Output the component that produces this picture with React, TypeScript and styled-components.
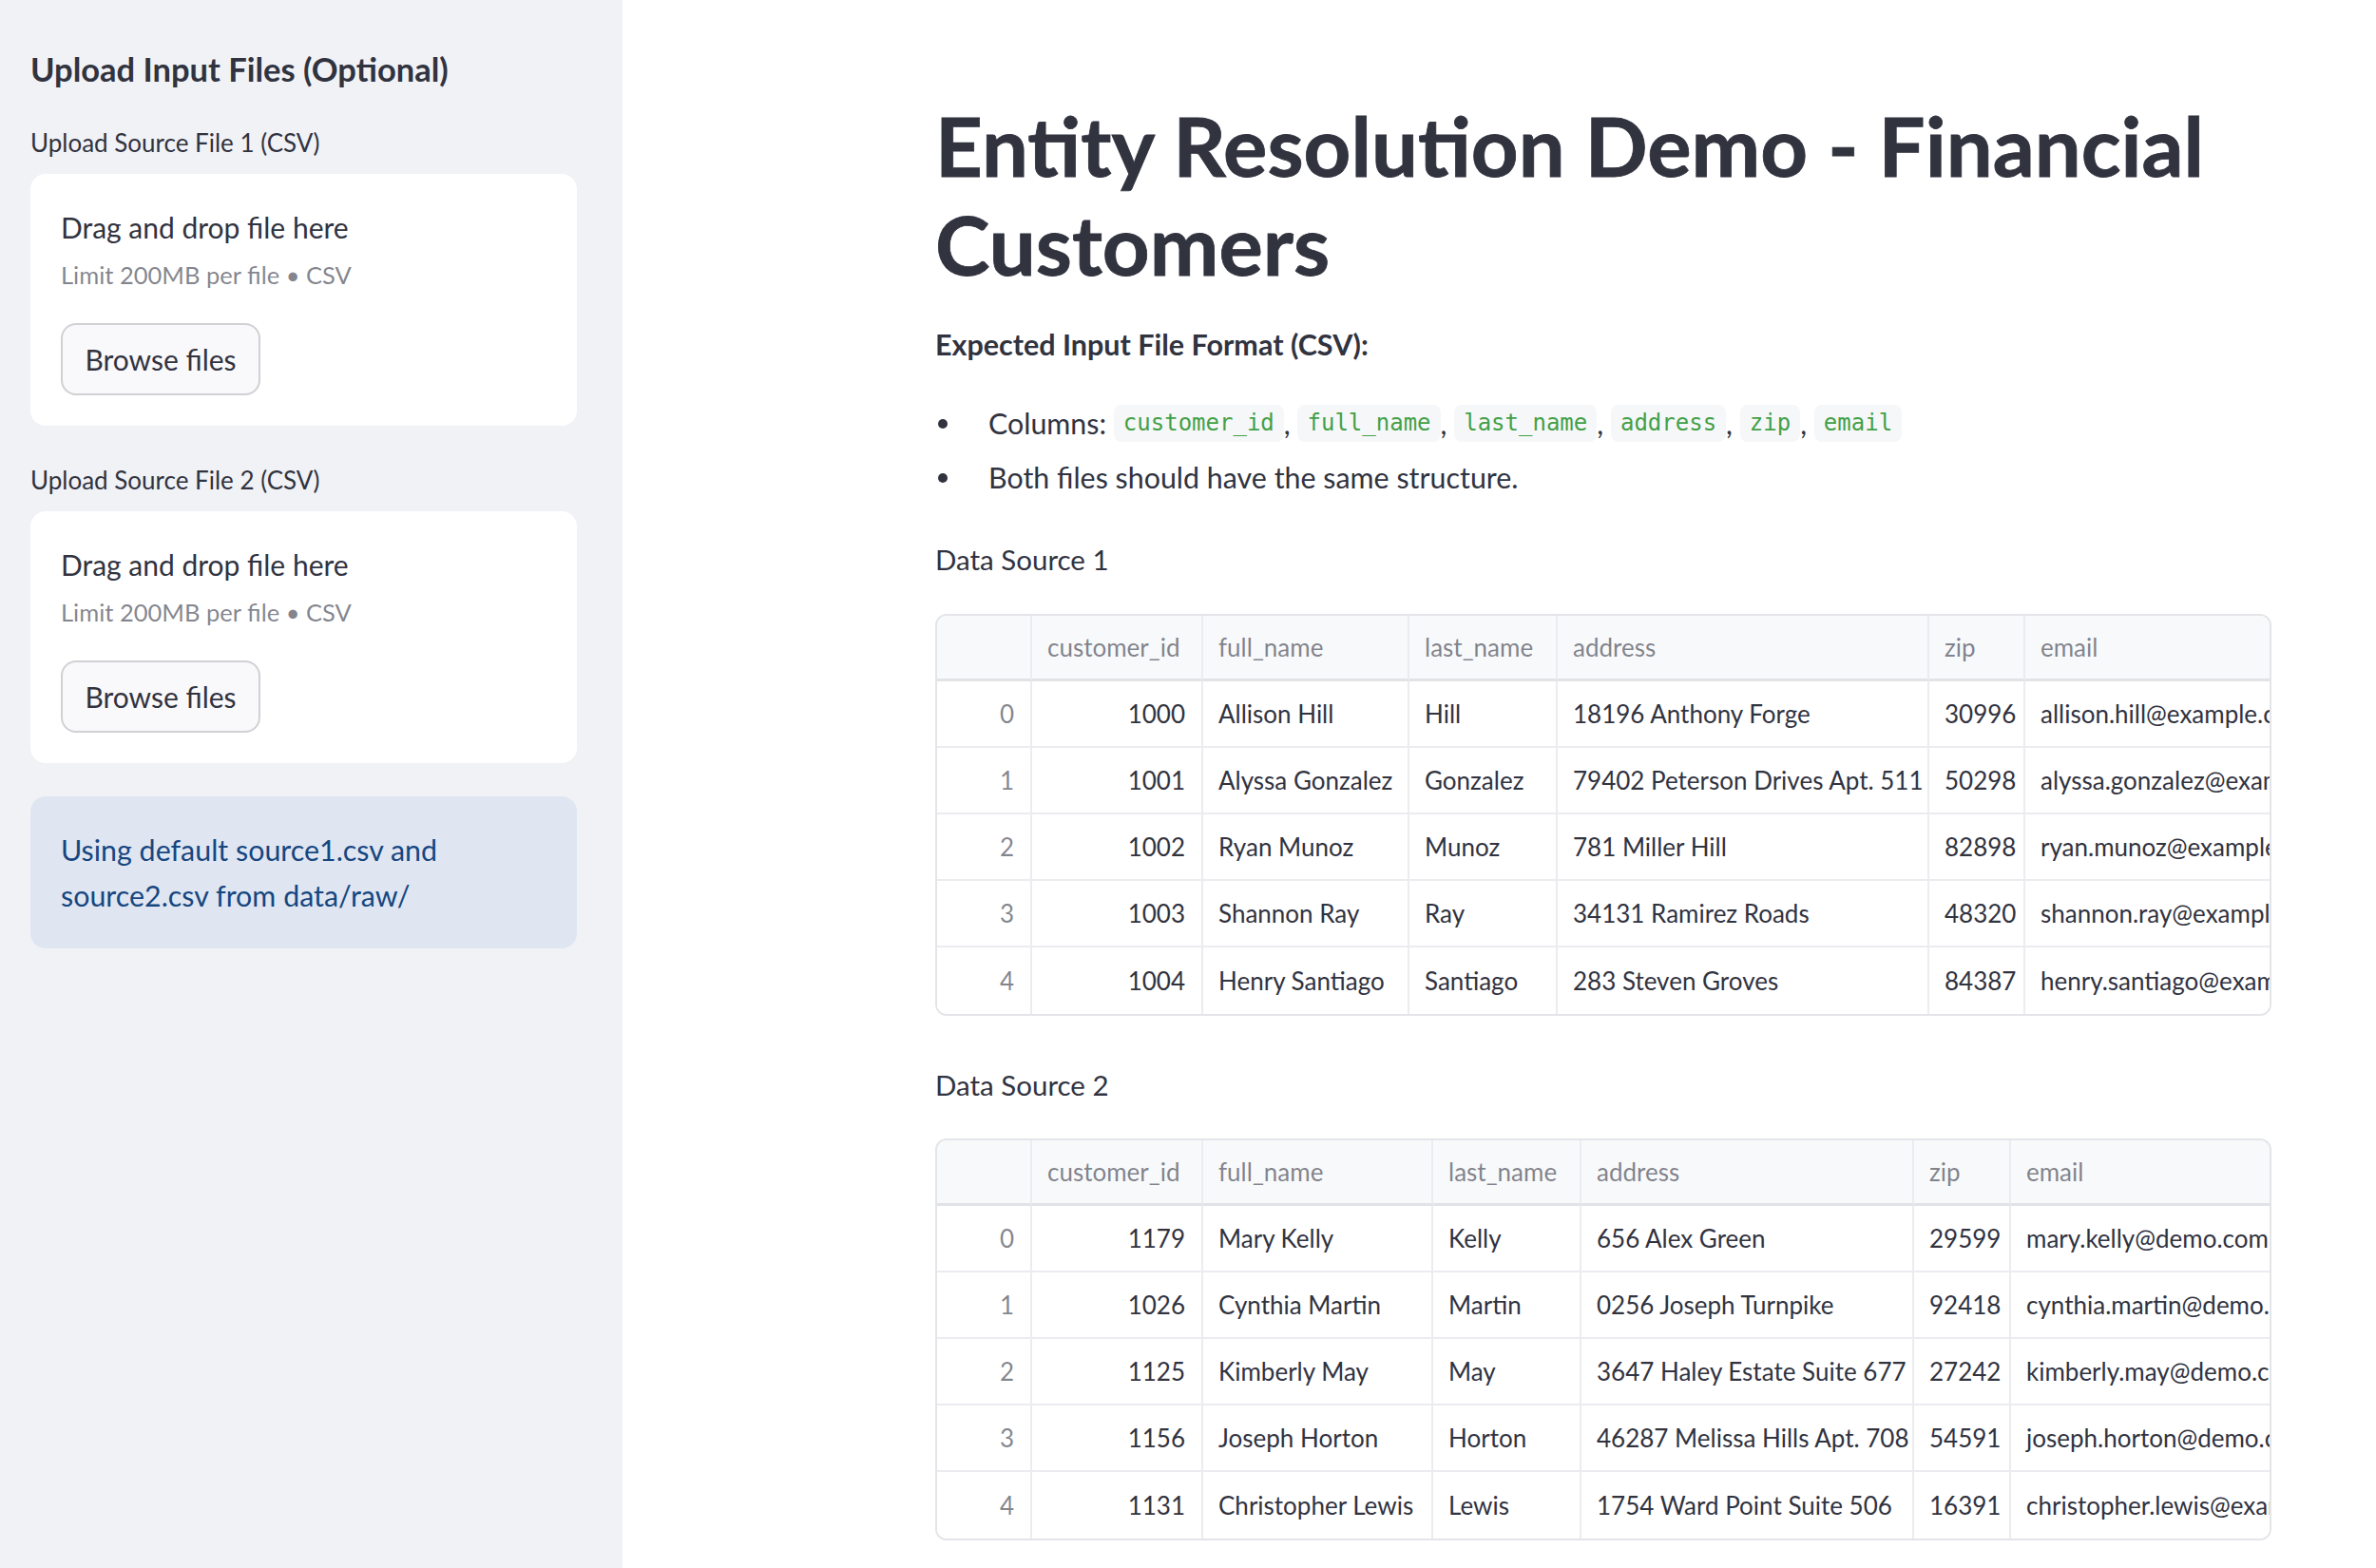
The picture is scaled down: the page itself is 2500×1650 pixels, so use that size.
import React from "react";
import styled, { createGlobalStyle } from "styled-components";

const GlobalStyle = createGlobalStyle`
  html, body { margin: 0; padding: 0; background: #ffffff; }
  body {
    font-family: Lato, "Noto Sans", sans-serif;
    color: #31333f;
    -webkit-font-smoothing: antialiased;
  }
  * { box-sizing: border-box; }
`;

const Page = styled.div`
  display: flex;
  width: 2500px;
  height: 1650px;
  overflow: hidden;
`;

const Sidebar = styled.aside`
  flex: 0 0 655px;
  background: #f0f2f6;
  padding: 49px 48px 0 32px;
  display: flex;
  flex-direction: column;
`;

const SidebarTitle = styled.h2`
  margin: 0;
  font-size: 34.5px;
  font-weight: 700;
  line-height: 48px;
  color: #31333f;
`;

const FieldLabel = styled.div<{ $top: number }>`
  margin: ${(p) => p.$top}px 0 13px;
  font-size: 26px;
  line-height: 40px;
  color: #31333f;
`;

const DropZone = styled.section`
  background: #ffffff;
  border-radius: 16px;
  padding: 32px;
  display: flex;
  flex-direction: column;
  align-items: flex-start;
`;

const DropTitle = styled.div`
  font-size: 30px;
  line-height: 48px;
  color: #31333f;
`;

const DropHint = styled.div`
  font-size: 25.5px;
  line-height: 52px;
  color: rgba(49, 51, 63, 0.6);
`;

const BrowseButton = styled.button`
  margin-top: 25px;
  width: 210px;
  height: 76px;
  padding: 0;
  border: 2px solid rgba(49, 51, 63, 0.2);
  border-radius: 16px;
  background: #f9f9fb;
  font-family: inherit;
  font-size: 30px;
  color: #31333f;
  cursor: pointer;
`;

const InfoBox = styled.div`
  margin-top: 35px;
  padding: 32px;
  border-radius: 16px;
  background: #dfe6f2;
  color: #17467f;
  font-size: 30.4px;
  line-height: 48px;
`;

const Main = styled.main`
  flex: 1;
  padding: 100px 0 0 329px;
`;

const Content = styled.div`
  width: 1406px;
  display: flex;
  flex-direction: column;
`;

const Title = styled.h1`
  margin: 0;
  font-size: 86.8px;
  line-height: 104px;
  font-weight: 700;
  color: #31333f;
  -webkit-text-stroke: 0.8px #31333f;
`;

const Lead = styled.p`
  margin: 29px 0 0;
  font-size: 30.5px;
  line-height: 51px;
  font-weight: 700;
`;

const List = styled.ul`
  margin: 32px 0 0;
  padding: 0;
  list-style: none;
  display: flex;
  flex-direction: column;
  gap: 6px;
`;

const Item = styled.li`
  display: flex;
  align-items: center;
  font-size: 30.4px;
  line-height: 51px;
  white-space: pre;
`;

const Dot = styled.span`
  flex: 0 0 10px;
  width: 10px;
  height: 10px;
  border-radius: 50%;
  background: #31333f;
  margin: 0 43px 0 3px;
`;

const Code = styled.code`
  font-family: "DejaVu Sans Mono", "Liberation Mono", monospace;
  font-size: 24px;
  line-height: 39px;
  padding: 0 10px;
  border-radius: 8px;
  background: #f6f7f9;
  color: #43a047;
`;

const Caption = styled.div<{ $top: number }>`
  margin-top: ${(p) => p.$top}px;
  font-size: 29.5px;
  line-height: 51px;
`;

const Grid = styled.div<{ $cols: string; $top: number }>`
  margin-top: ${(p) => p.$top}px;
  display: grid;
  grid-template-columns: ${(p) => p.$cols};
  border: 2px solid #e4e5e9;
  border-radius: 12px;
  overflow: hidden;
  width: 1406px;
`;

const Cell = styled.div<{ $head?: boolean; $index?: boolean; $right?: boolean; $last?: boolean; $end?: boolean }>`
  height: ${(p) => (p.$head ? 69 : 70)}px;
  display: flex;
  align-items: center;
  justify-content: ${(p) => (p.$right ? "flex-end" : "flex-start")};
  padding: 0 17px 0 16px;
  font-size: 26px;
  white-space: nowrap;
  overflow: hidden;
  background: ${(p) => (p.$head ? "#f8f9fb" : "#ffffff")};
  color: ${(p) => (p.$head || p.$index ? "rgba(49, 51, 63, 0.6)" : "#31333f")};
  border-right: ${(p) => (p.$end ? "none" : "2px solid #ebecef")};
  border-bottom: ${(p) => (p.$last ? "none" : p.$head ? "3px solid #e2e3e7" : "2px solid #ebecef")};
`;

type Row = [string, string, string, string, string, string];

const headers = ["customer_id", "full_name", "last_name", "address", "zip", "email"];

const source1: Row[] = [
  ["1000", "Allison Hill", "Hill", "18196 Anthony Forge", "30996", "allison.hill@example.com"],
  ["1001", "Alyssa Gonzalez", "Gonzalez", "79402 Peterson Drives Apt. 511", "50298", "alyssa.gonzalez@example.com"],
  ["1002", "Ryan Munoz", "Munoz", "781 Miller Hill", "82898", "ryan.munoz@example.com"],
  ["1003", "Shannon Ray", "Ray", "34131 Ramirez Roads", "48320", "shannon.ray@example.com"],
  ["1004", "Henry Santiago", "Santiago", "283 Steven Groves", "84387", "henry.santiago@example.com"],
];

const source2: Row[] = [
  ["1179", "Mary Kelly", "Kelly", "656 Alex Green", "29599", "mary.kelly@demo.com"],
  ["1026", "Cynthia Martin", "Martin", "0256 Joseph Turnpike", "92418", "cynthia.martin@demo.com"],
  ["1125", "Kimberly May", "May", "3647 Haley Estate Suite 677", "27242", "kimberly.may@demo.com"],
  ["1156", "Joseph Horton", "Horton", "46287 Melissa Hills Apt. 708", "54591", "joseph.horton@demo.com"],
  ["1131", "Christopher Lewis", "Lewis", "1754 Ward Point Suite 506", "16391", "christopher.lewis@example.com"],
];

function DataTable({ rows, cols, top }: { rows: Row[]; cols: string; top: number }) {
  return (
    <Grid $cols={cols} $top={top}>
      <Cell $head />
      {headers.map((h, i) => (
        <Cell key={h} $head $end={i === headers.length - 1}>
          {h}
        </Cell>
      ))}
      {rows.map((r, ri) => {
        const last = ri === rows.length - 1;
        return (
          <React.Fragment key={ri}>
            <Cell $index $right $last={last}>
              {ri}
            </Cell>
            {r.map((v, ci) => (
              <Cell key={ci} $right={ci === 0} $last={last} $end={ci === r.length - 1}>
                {v}
              </Cell>
            ))}
          </React.Fragment>
        );
      })}
    </Grid>
  );
}

function Uploader() {
  return (
    <DropZone>
      <DropTitle>Drag and drop file here</DropTitle>
      <DropHint>Limit 200MB per file • CSV</DropHint>
      <BrowseButton>Browse files</BrowseButton>
    </DropZone>
  );
}

const columns = ["customer_id", "full_name", "last_name", "address", "zip", "email"];

export default function App() {
  return (
    <>
      <GlobalStyle />
      <Page>
        <Sidebar>
          <SidebarTitle>Upload Input Files (Optional)</SidebarTitle>
          <FieldLabel $top={33}>Upload Source File 1 (CSV)</FieldLabel>
          <Uploader />
          <FieldLabel $top={37}>Upload Source File 2 (CSV)</FieldLabel>
          <Uploader />
          <InfoBox>Using default source1.csv and source2.csv from data/raw/</InfoBox>
        </Sidebar>
        <Main>
          <Content>
            <Title>Entity Resolution Demo - Financial Customers</Title>
            <Lead>Expected Input File Format (CSV):</Lead>
            <List>
              <Item>
                <Dot />
                {"Columns: "}
                {columns.map((c, i) => (
                  <React.Fragment key={c}>
                    <Code>{c}</Code>
                    {i < columns.length - 1 ? ", " : ""}
                  </React.Fragment>
                ))}
              </Item>
              <Item>
                <Dot />
                Both files should have the same structure.
              </Item>
            </List>
            <Caption $top={35}>Data Source 1</Caption>
            <DataTable rows={source1} cols="100px 180px 217px 156px 391px 101px 420px" top={32} />
            <Caption $top={47}>Data Source 2</Caption>
            <DataTable rows={source2} cols="100px 180px 242px 156px 350px 102px 420px" top={31} />
          </Content>
        </Main>
      </Page>
    </>
  );
}
